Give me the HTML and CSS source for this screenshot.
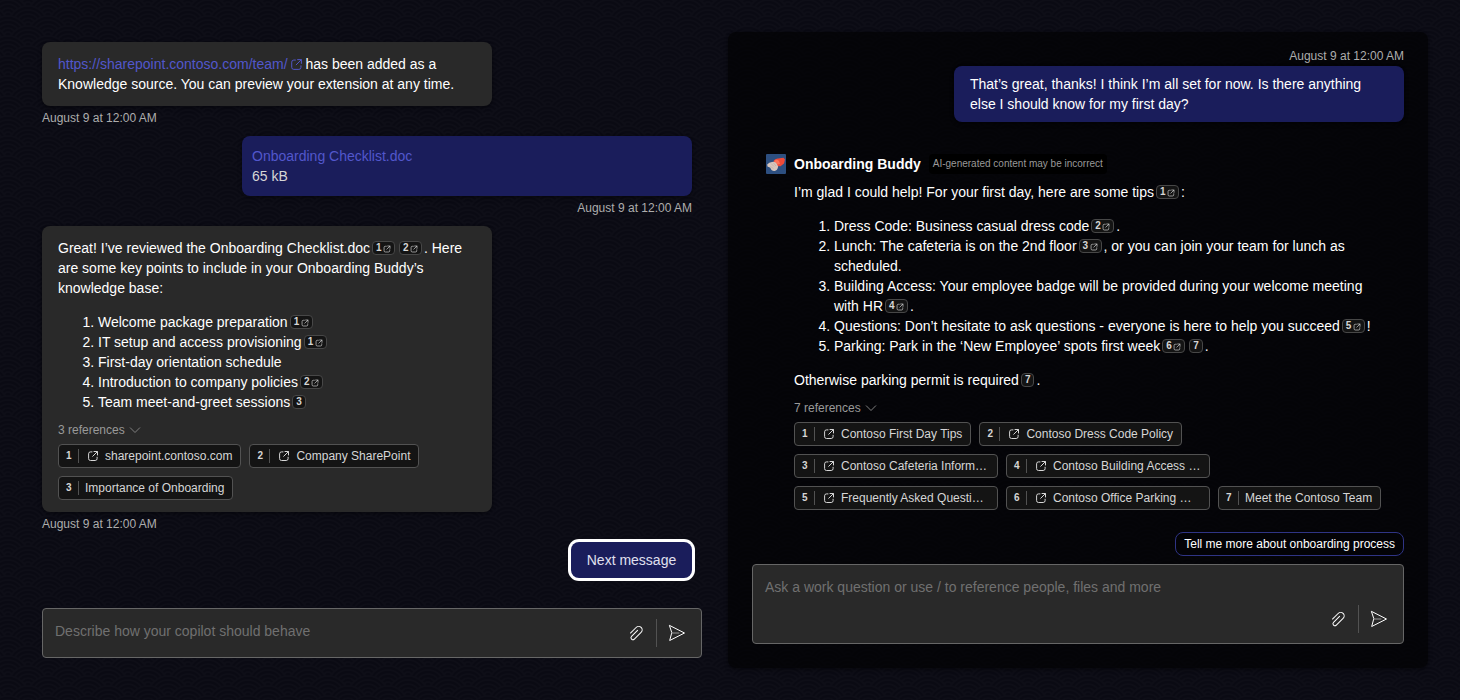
FILE: index.html
```html
<!DOCTYPE html>
<html lang="en">
<head>
<meta charset="utf-8">
<title>Copilot chat</title>
<link rel="stylesheet" href="styles.css">
</head>
<body>
<svg class="backdrop" width="1460" height="700" aria-hidden="true">
  <defs>
    <g id="scale">
      <circle r="20"/><circle r="16"/><circle r="12"/><circle r="8"/><circle r="4"/>
    </g>
    <pattern id="waves" width="40" height="20" patternUnits="userSpaceOnUse" patternTransform="translate(8 6)">
      <g class="wave">
        <use href="#scale" x="20" y="0"/>
        <use href="#scale" x="0" y="10"/><use href="#scale" x="40" y="10"/>
        <use href="#scale" x="20" y="20"/>
        <use href="#scale" x="0" y="30"/><use href="#scale" x="40" y="30"/>
        <use href="#scale" x="20" y="40"/>
      </g>
    </pattern>
    <symbol id="open" viewBox="0 0 12 12"><path d="M5 1.900H3.500A1.900 1.900 0 0 0 1.600 3.800v4.800a1.900 1.900 0 0 0 1.900 1.900h4.700a1.900 1.900 0 0 0 1.900-1.900V7.200M7 1.500h3.500V5M10.300 1.700L5.700 6.300"/></symbol>
    <symbol id="chevron" viewBox="0 0 12 12"><path d="M1.300 3.800L6 8.500l4.700-4.700"/></symbol>
    <symbol id="clip" viewBox="0 0 20 20"><path d="M4.830 10.480l5.650-5.650a3 3 0 0 1 4.250 4.240L8 15.800a1.500 1.500 0 0 1-2.120-2.120l6-6.010a.5.5 0 1 0-.7-.71l-6 6.010a2.500 2.500 0 0 0 3.530 3.540l6.710-6.720a4 4 0 1 0-5.650-5.660L4.120 9.780a.5.5 0 0 0 .7.7Z"/></symbol>
    <symbol id="send" viewBox="0 0 20 20"><path d="M2.700 2.500L17.500 10L2.700 17.500L4.700 10Z"/><path class="send-line" d="M5 10h7"/></symbol>
  </defs>
  <rect width="1460" height="700" fill="url(#waves)"/>
</svg>
<main class="page">
  <section class="builder">
    <div class="bubble"><a class="link">https://sharepoint.contoso.com/team/<svg class="icon link-icon"><use href="#open"/></svg></a> has been added as a Knowledge source. You can preview your extension at any time.</div>
    <div class="time">August 9 at 12:00 AM</div>
    <div class="bubble mine file"><a class="link">Onboarding Checklist.doc</a><div class="size">65 kB</div></div>
    <div class="time time-right">August 9 at 12:00 AM</div>
    <div class="bubble">
      <p>Great! I’ve reviewed the Onboarding Checklist.doc<span class="cite">1<svg class="icon"><use href="#open"/></svg></span><span class="cite">2<svg class="icon"><use href="#open"/></svg></span>. Here are some key points to include in your Onboarding Buddy’s knowledge base:</p>
      <ol>
        <li>Welcome package preparation<span class="cite">1<svg class="icon"><use href="#open"/></svg></span></li>
        <li>IT setup and access provisioning<span class="cite">1<svg class="icon"><use href="#open"/></svg></span></li>
        <li>First-day orientation schedule</li>
        <li>Introduction to company policies<span class="cite">2<svg class="icon"><use href="#open"/></svg></span></li>
        <li>Team meet-and-greet sessions<span class="cite">3</span></li>
      </ol>
      <div class="refs-title">3 references<svg class="icon chevron"><use href="#chevron"/></svg></div>
      <div class="refs">
        <span class="ref"><b>1</b><svg class="icon"><use href="#open"/></svg>sharepoint.contoso.com</span>
        <span class="ref"><b>2</b><svg class="icon"><use href="#open"/></svg>Company SharePoint</span>
        <span class="ref"><b>3</b>Importance of Onboarding</span>
      </div>
    </div>
    <div class="time">August 9 at 12:00 AM</div>
    <button class="next">Next message</button>
    <div class="composer">
      <span class="placeholder">Describe how your copilot should behave</span>
      <div class="tools"><svg class="icon-fill"><use href="#clip"/></svg><i class="rule"></i><svg class="icon tool"><use href="#send"/></svg></div>
    </div>
  </section>

  <section class="preview">
    <div class="time time-top">August 9 at 12:00 AM</div>
    <div class="bubble mine">That’s great, thanks! I think I’m all set for now. Is there anything else I should know for my first day?</div>
    <article class="reply">
      <header class="who">
        <svg class="avatar" viewBox="0 0 20 20">
          <rect width="20" height="20" fill="#2d4f80"/>
          <path fill="#f04a38" d="M7.500 7Q9 4.300 12 4.500L17.500 3.800L19 5.500L18 9.500L14.500 12.300L10 12Z"/>
          <path fill="#ff7158" d="M8.500 6.500Q11 5 13 7L14 10L11.500 10.500L8.500 9Z"/>
          <path fill="#d8c6bd" d="M1.200 10.500Q3 8 6 8Q9 7.300 10.500 9.500L12.200 12.500Q11.500 16.500 8.500 17Q5.500 17.200 4.300 13.800L1.500 12.500Z"/>
          <path fill="none" stroke="#bda79c" stroke-width=".6" d="M5 9.500l3 3M7.500 9l2.500 3M4.500 12.500l3 2"/>
        </svg>
        <strong>Onboarding Buddy</strong>
        <span class="notice">AI-generated content may be incorrect</span>
      </header>
      <div class="answer">
        <p>I’m glad I could help! For your first day, here are some tips<span class="cite">1<svg class="icon"><use href="#open"/></svg></span>:</p>
        <ol>
          <li>Dress Code: Business casual dress code<span class="cite">2<svg class="icon"><use href="#open"/></svg></span>.</li>
          <li>Lunch: The cafeteria is on the 2nd floor<span class="cite">3<svg class="icon"><use href="#open"/></svg></span>, or you can join your team for lunch as scheduled.</li>
          <li>Building Access: Your employee badge will be provided during your welcome meeting with HR<span class="cite">4<svg class="icon"><use href="#open"/></svg></span>.</li>
          <li>Questions: Don’t hesitate to ask questions - everyone is here to help you succeed<span class="cite">5<svg class="icon"><use href="#open"/></svg></span>!</li>
          <li>Parking: Park in the ‘New Employee’ spots first week<span class="cite">6<svg class="icon"><use href="#open"/></svg></span><span class="cite">7</span>.</li>
        </ol>
        <p>Otherwise parking permit is required<span class="cite">7</span>.</p>
        <div class="refs-title">7 references<svg class="icon chevron"><use href="#chevron"/></svg></div>
        <div class="refs">
          <span class="ref"><b>1</b><svg class="icon"><use href="#open"/></svg>Contoso First Day Tips</span>
          <span class="ref"><b>2</b><svg class="icon"><use href="#open"/></svg>Contoso Dress Code Policy</span>
          <span class="ref ref-wide"><b>3</b><svg class="icon"><use href="#open"/></svg>Contoso Cafeteria Inform…</span>
          <span class="ref ref-wide"><b>4</b><svg class="icon"><use href="#open"/></svg>Contoso Building Access …</span>
          <span class="ref ref-wide"><b>5</b><svg class="icon"><use href="#open"/></svg>Frequently Asked Questi…</span>
          <span class="ref ref-wide"><b>6</b><svg class="icon"><use href="#open"/></svg>Contoso Office Parking …</span>
          <span class="ref"><b>7</b>Meet the Contoso Team</span>
        </div>
      </div>
    </article>
    <button class="suggestion">Tell me more about onboarding process</button>
    <div class="composer composer-tall">
      <span class="placeholder">Ask a work question or use / to reference people, files and more</span>
      <div class="tools"><svg class="icon-fill"><use href="#clip"/></svg><i class="rule"></i><svg class="icon tool"><use href="#send"/></svg></div>
    </div>
  </section>
</main>
</body>
</html>
```
FILE: styles.css
```css
* { box-sizing: border-box; }
body {
  margin: 0;
  height: 700px;
  overflow: hidden;
  background: #0b0b15;
  color: #fff;
  font: 14px/20px "Liberation Sans", Arial, sans-serif;
}
.backdrop { position: absolute; inset: 0; }
.wave { fill: #0a0a13; stroke: #0e0e17; stroke-width: 1.7; }
.page {
  position: relative;
  display: grid;
  grid-template-columns: 660px 700px;
  column-gap: 26px;
  height: 700px;
  padding: 32px 32px 32px 42px;
}
.builder { display: flex; flex-direction: column; padding-top: 10px; padding-bottom: 10px; }
.bubble {
  width: 450px;
  padding: 12px 16px;
  border-radius: 8px;
  background: #292929;
  box-shadow: 0 0 2px rgba(0,0,0,.24), 0 2px 4px rgba(0,0,0,.28);
}
.mine { background: #1a1d5b; }
.file { align-self: flex-end; margin-right: 10px; padding: 10px; }
.size { color: #d6d6d6; }
.link { color: #5257cc; }
.time { margin: 4px 0 10px; color: #adadad; font-size: 12px; line-height: 16px; }
.time-right { align-self: flex-end; margin-right: 10px; }
.icon { fill: none; stroke: currentColor; stroke-width: 1; stroke-linecap: round; stroke-linejoin: round; flex: none; }
.icon-fill { width: 20px; height: 20px; fill: #fff; }
.link-icon { width: 13px; height: 13px; margin-left: 2px; margin-right: -1px; vertical-align: -2px; stroke-width: .9; }
p { margin: 0 0 14px; }
ol { margin: 0 0 10px; padding-left: 40px; }
.cite {
  display: inline-flex;
  align-items: center;
  gap: 1.4px;
  height: 14px;
  margin: 0 2px;
  padding: 0 3px;
  border: 1px solid #474747;
  border-radius: 4px;
  background: #141414;
  color: #d6d6d6;
  font-size: 10px;
  font-weight: 700;
  line-height: 12px;
  vertical-align: 2px;
}
.cite .icon { width: 8px; height: 8px; margin-top: 1px; }
.refs-title { display: flex; align-items: center; gap: 4px; margin-bottom: 6px; color: #999; font-size: 12px; line-height: 16px; }
.chevron { width: 12px; height: 12px; stroke: #808080; }
.refs { display: flex; flex-wrap: wrap; gap: 8px; }
.ref {
  display: flex;
  align-items: center;
  height: 24px;
  padding: 0 8px 0 7px;
  border: 1px solid #525252;
  border-radius: 4px;
  background: #141414;
  color: #d6d6d6;
  font-size: 12px;
  line-height: 16px;
  white-space: nowrap;
}
.ref b { width: 13px; height: 14px; margin-right: 6px; border-right: 1px solid #525252; font-size: 10px; line-height: 13px; }
.ref .icon { width: 12px; height: 12px; margin: 0 6px 0 2px; }
.ref-wide { width: 204px; }
.next {
  align-self: flex-end;
  width: 121px;
  height: 36px;
  margin-right: 10px;
  padding: 0;
  border: 0;
  border-radius: 8px;
  background: #1a1d5b;
  color: #e0e0f0;
  font: inherit;
  box-shadow: 0 0 0 3px #fff;
}
.composer {
  display: flex;
  justify-content: space-between;
  height: 50px;
  margin-top: auto;
  padding: 10px 14px 10px 12px;
  border: 1px solid #666;
  border-radius: 4px;
  background: #292929;
}
.placeholder { color: #707070; padding-top: 2px; }
.tools { display: flex; align-items: center; height: 28px; color: #fff; }
.rule { width: 1px; height: 28px; margin: 0 10px; background: #525252; }
.tool { width: 20px; height: 20px; }
.send-line { stroke: #999; }
.preview {
  display: flex;
  flex-direction: column;
  align-items: flex-end;
  padding: 16px 24px 24px;
  border-radius: 8px;
  background: rgba(0,0,0,.6);
  box-shadow: 0 0 2px rgba(0,0,0,.24), 0 2px 4px rgba(0,0,0,.28);
}
.time-top { margin: 0 0 2px; }
.preview > .bubble { padding: 8px 16px; }
.reply { align-self: stretch; margin: 32px 16px 0 14px; }
.who { display: flex; align-items: center; height: 20px; gap: 8px; }
.avatar { width: 20px; height: 20px; border-radius: 1px; }
.notice { height: 20px; padding: 0 4px; border-radius: 4px; background: #000; color: #999; font-size: 10px; line-height: 19px; }
.answer { padding: 8px 0 0 28px; }
.answer p:nth-of-type(2) { margin-bottom: 10px; }
.answer ol { margin-bottom: 14px; }
.suggestion {
  height: 24px;
  margin-top: 22px;
  padding: 0 8px;
  border: 1px solid #2f3485;
  border-radius: 8px;
  background: #030307;
  color: #fff;
  font: 12px/16px "Liberation Sans", Arial, sans-serif;
}
.composer-tall { flex-direction: column; align-self: stretch; height: 80px; }
.composer-tall .tools { align-self: flex-end; }
```
